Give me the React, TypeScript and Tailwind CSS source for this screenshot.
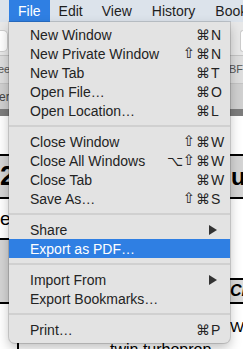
import React from "react";

type Item =
  | { kind: "sep" }
  | { kind: "item"; label: string; mods?: string[]; keyChar?: string; arrow?: boolean; active?: boolean };

const items: Item[] = [
  { kind: "item", label: "New Window", mods: ["⌘"], keyChar: "N" },
  { kind: "item", label: "New Private Window", mods: ["⇧", "⌘"], keyChar: "N" },
  { kind: "item", label: "New Tab", mods: ["⌘"], keyChar: "T" },
  { kind: "item", label: "Open File…", mods: ["⌘"], keyChar: "O" },
  { kind: "item", label: "Open Location…", mods: ["⌘"], keyChar: "L" },
  { kind: "sep" },
  { kind: "item", label: "Close Window", mods: ["⇧", "⌘"], keyChar: "W" },
  { kind: "item", label: "Close All Windows", mods: ["⌥", "⇧", "⌘"], keyChar: "W" },
  { kind: "item", label: "Close Tab", mods: ["⌘"], keyChar: "W" },
  { kind: "item", label: "Save As…", mods: ["⇧", "⌘"], keyChar: "S" },
  { kind: "sep" },
  { kind: "item", label: "Share", arrow: true },
  { kind: "item", label: "Export as PDF…", active: true },
  { kind: "sep" },
  { kind: "item", label: "Import From", arrow: true },
  { kind: "item", label: "Export Bookmarks…" },
  { kind: "sep" },
  { kind: "item", label: "Print…", mods: ["⌘"], keyChar: "P" },
];

function Mod({ m }: { m: string }) {
  const size = m === "⇧" ? "text-[15px]" : "text-[14px]";
  return (
    <span className={`inline-flex w-[14px] justify-center font-['DejaVu_Sans',sans-serif] leading-none ${size}`}>
      {m}
    </span>
  );
}

function Row({ item }: { item: Extract<Item, { kind: "item" }> }) {
  const base = item.active ? "bg-[#2f7fe3] text-white" : "text-[#232323]";
  return (
    <div className={`flex h-[19px] items-center pl-[21px] ${item.arrow ? "pr-[13px]" : "pr-[5px]"} ${base}`}>
      <span className="flex-1 leading-none">{item.label}</span>
      {item.keyChar && (
        <span className="flex items-center leading-none">
          {item.mods?.map((m, i) => (
            <Mod key={i} m={m} />
          ))}
          <span className="ml-[1px] inline-block w-[14px] text-left">{item.keyChar}</span>
        </span>
      )}
      {item.arrow && (
        <svg width="8" height="10" viewBox="0 0 8 10" className="text-[#333]">
          <polygon points="0,0 8,5 0,10" fill="currentColor" />
        </svg>
      )}
    </div>
  );
}

export default function App() {
  return (
    <div className="relative h-[349px] w-[243px] overflow-hidden bg-white font-['Liberation_Sans',Arial,sans-serif]">
      {/* menu bar */}
      <div className="flex h-[22px] items-stretch whitespace-nowrap bg-[#dce3eb] pl-[9px] text-[14px] text-[#1e1e1e]">
        <div className="flex items-center bg-[#2f7fe3] px-[9px] text-white">File</div>
        <div className="flex items-center px-[9px]">Edit</div>
        <div className="flex items-center px-[10px]">View</div>
        <div className="flex items-center px-[10px]">History</div>
        <div className="flex items-center px-[10px]">Bookmarks</div>
      </div>

      {/* toolbar */}
      <div className="flex h-[34px] items-start justify-between border-b border-[#c4c4c4] bg-[#e8e8e8] pt-[8px]">
        <div className="h-[22px] w-[8px] rounded-r-[5px] border border-l-0 border-[#cdcdcd] bg-white" />
        <div className="h-[22px] w-[3px] rounded-l-[5px] border border-r-0 border-[#cdcdcd] bg-white" />
      </div>

      {/* bookmarks bar */}
      <div className="flex h-[28px] items-center justify-between whitespace-nowrap border-b border-[#c4c4c4] bg-[#dedede] text-[11px] text-[#555]">
        <span className="-ml-[2px]">ee</span>
        <span className="w-[14px] overflow-hidden">BFC</span>
      </div>

      {/* tab bar */}
      <div className="flex h-[25px] items-center bg-[#d0d0d0] text-[12px] text-[#444]">
        <span className="-ml-[1px]">er</span>
      </div>
      <div className="h-[7px] bg-[#7d7d7d]" />

      {/* page content */}
      <div className="flex">
        <div className="flex w-[9px] flex-col overflow-hidden whitespace-nowrap">
          <div className="h-[38px]" />
          <div className="flex h-[45px] items-center border-y-2 border-black bg-[#d4d4d4] text-[27px] font-bold leading-none">
            2
          </div>
          <div className="flex h-[39px] items-center text-[19px] leading-none">e</div>
          <div className="h-[66px] border-y-2 border-black bg-[#d4d4d4]" />
        </div>
        <div className="flex flex-1 flex-col">
          <div className="h-[226px]" />
          <div className="flex items-start pl-[8px]">
            <div className="mt-[-4px] h-[20px] w-[2px] bg-black" />
            <span className="ml-[91px] whitespace-nowrap text-[16px] leading-none text-black">twin turboprop</span>
          </div>
        </div>
        <div className="flex w-[13px] flex-col overflow-hidden whitespace-nowrap">
          <div className="h-[38px]" />
          <div className="flex h-[45px] items-center border-y-2 border-black bg-[#d4d4d4] pl-[1px] text-[24px] font-bold leading-none">
            ur
          </div>
          <div className="h-[79px]" />
          <div className="flex h-[26px] items-center border-y-2 border-black bg-[#dcdcdc] text-[16px] font-bold italic leading-none">
            Cl
          </div>
          <div className="h-[15px]" />
          <div className="text-[15px] leading-none">Wir</div>
        </div>
      </div>

      {/* File menu dropdown */}
      <div className="absolute left-[9px] top-[22px] w-[221px] rounded-b-[6px] bg-[#e3e3e3] pb-[4px] pt-[3px] text-[14px] shadow-[0_0_0_1px_rgba(0,0,0,0.14),0_5px_12px_rgba(0,0,0,0.25)]">
        {items.map((it, i) =>
          it.kind === "sep" ? (
            <div key={i} className="my-[5px] h-[2px] bg-[#d0d0d0]" />
          ) : (
            <Row key={i} item={it} />
          )
        )}
      </div>
    </div>
  );
}
